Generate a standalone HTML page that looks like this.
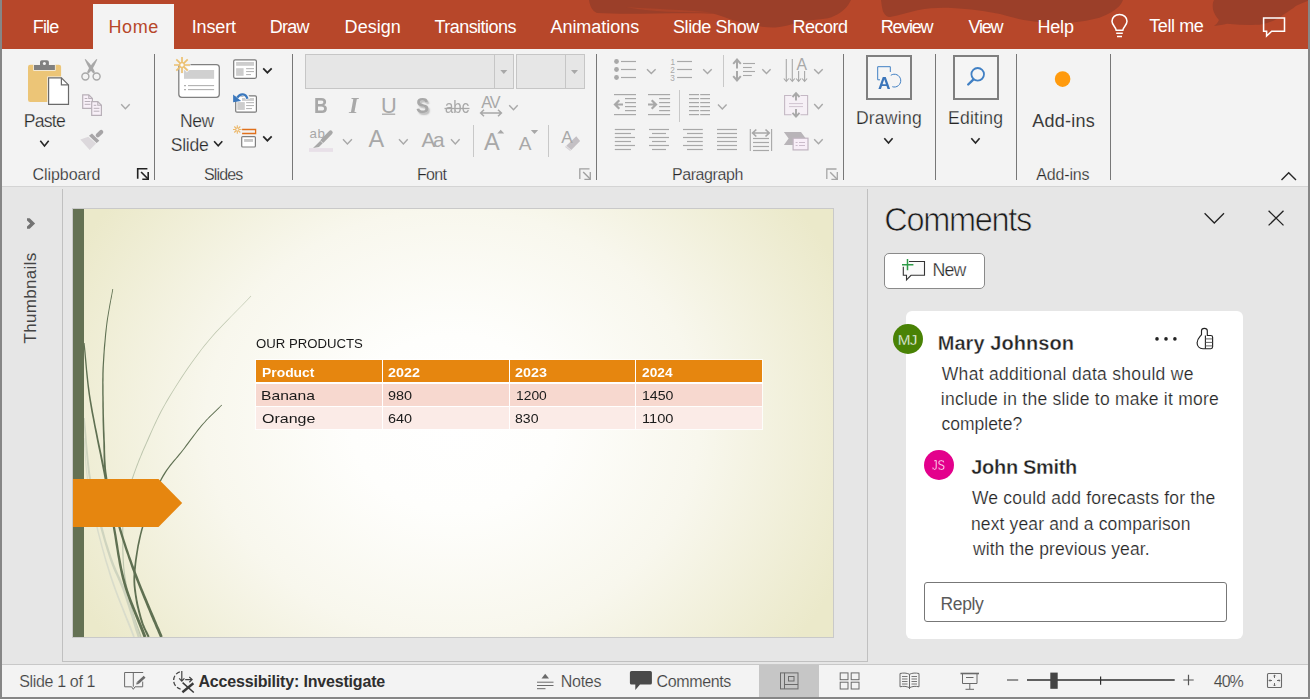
<!DOCTYPE html>
<html lang="en"><head><meta charset="utf-8"><title>PowerPoint - Comments</title>
<style>
*{box-sizing:border-box;margin:0;padding:0}
html,body{width:1310px;height:699px;overflow:hidden;background:#e6e6e6;font-family:"Liberation Sans",sans-serif}
#app{position:absolute;left:0;top:0;width:1310px;height:699px;overflow:hidden;background:#e6e6e6}
.t{position:absolute;white-space:pre;font-family:"Liberation Sans",sans-serif}
.b{position:absolute}
svg{position:absolute;left:0;top:0;overflow:visible}
</style></head>
<body><div id="app">
<div class="b" style="left:0;top:0;width:1310px;height:49px;background:#b7472a"></div>
<svg width="1310" height="49" viewBox="0 0 1310 49">
<g fill="#9b3f29">
<path d="M589 0 C590 6 592 11 597 13 C630 15 680 12 713.7 13.7 C722 16 728 18.5 734 20.6 C744 24 752 25.5 759.5 26.3 C765 27.3 770 27.7 775.6 27.5 C783 27 790 25 796 23 C808 20.5 818 19.5 828 18.3 C838 15 843 11 846.6 6.9 C849 4 850 2 851 0 Z"/>
<path d="M881 0 C881.5 4 882 8 883 11.4 C885 15 887 17 890 17 C900 15.5 908 12.5 917.5 10.3 C930 8 940 7.5 952 8 C970 9 985 11 1000 14 C1008 16 1016 18.5 1023.7 20 C1040 23 1056 23.5 1071 22.5 C1082 21.5 1091 20 1099.4 17.7 C1108 14.5 1114 11 1118.3 7 C1120.5 5 1122 2.5 1123 0 Z"/>
<path d="M1214 0 C1212.5 3 1212.5 6 1213 9.5 C1214 13 1216 17 1218.9 20 C1218 22.5 1216 24.5 1214 26 C1219 25.5 1223 24.5 1227 23.7 C1238 24.8 1249 25.2 1260 24.8 C1270 23 1278 19 1284 14.2 C1289 11 1293 8.5 1295.8 6 C1300 4 1305 2 1310 0 Z"/>
</g>
<path d="M626 7 C650 9 685 9.5 712 12.5 C685 12.5 650 12 626 7 Z" fill="#ab4329"/>
</svg>
<div class="b" style="left:93px;top:4px;width:81px;height:46px;background:#f3f3f3"></div>
<div class="t" style="left:32.80px;top:15px;font-size:18px;line-height:24px;letter-spacing:-0.868px;color:#ffffff;">File</div>
<div class="t" style="left:191.70px;top:15px;font-size:18px;line-height:24px;letter-spacing:-0.146px;color:#ffffff;">Insert</div>
<div class="t" style="left:269.80px;top:15px;font-size:18px;line-height:24px;letter-spacing:-0.739px;color:#ffffff;">Draw</div>
<div class="t" style="left:344.60px;top:15px;font-size:18px;line-height:24px;letter-spacing:0.036px;color:#ffffff;">Design</div>
<div class="t" style="left:434.50px;top:15px;font-size:18px;line-height:24px;letter-spacing:-0.548px;color:#ffffff;">Transitions</div>
<div class="t" style="left:550.40px;top:15px;font-size:18px;line-height:24px;letter-spacing:-0.016px;color:#ffffff;">Animations</div>
<div class="t" style="left:673.00px;top:15px;font-size:18px;line-height:24px;letter-spacing:-0.418px;color:#ffffff;">Slide Show</div>
<div class="t" style="left:792.50px;top:15px;font-size:18px;line-height:24px;letter-spacing:-0.504px;color:#ffffff;">Record</div>
<div class="t" style="left:880.70px;top:15px;font-size:18px;line-height:24px;letter-spacing:-1.226px;color:#ffffff;">Review</div>
<div class="t" style="left:968.60px;top:15px;font-size:18px;line-height:24px;letter-spacing:-1.301px;color:#ffffff;">View</div>
<div class="t" style="left:1037.40px;top:15px;font-size:18px;line-height:24px;letter-spacing:-0.140px;color:#ffffff;">Help</div>
<div class="t" style="left:108.60px;top:15px;font-size:18px;line-height:24px;letter-spacing:0.532px;color:#b7472a;">Home</div>
<div class="t" style="left:1149.30px;top:14px;font-size:18px;line-height:24px;letter-spacing:-0.434px;color:#ffffff;">Tell me</div>
<svg width="1310" height="49" viewBox="0 0 1310 49" fill="none" stroke="#fff" stroke-width="1.55">
<path d="M1116.2 30.2 C1116.2 27 1112 25.5 1112 21.3 C1112 17.3 1115.3 14.5 1119.5 14.5 C1123.700 14.5 1127 17.3 1127 21.3 C1127 25.5 1122.8 27 1122.8 30.2 Z"/>
<path d="M1116.2 33.300 H1122.8 M1117 36.400 H1122"/>
<path d="M1263.600 18 H1284.500 V31.200 H1271.700 L1266.600 36 V31.200 H1263.600 Z"/>
</svg>
<div class="b" style="left:0;top:0;width:2px;height:699px;background:#868686;z-index:50"></div>
<div class="b" style="left:1308px;top:0;width:2px;height:699px;background:#868686;z-index:50"></div>
<div class="b" style="left:0;top:697px;width:1310px;height:2px;background:#868686;z-index:50"></div>
<div class="b" style="left:0;top:49px;width:1310px;height:138px;background:#f3f3f3;border-bottom:1px solid #d4d4d4"></div>
<div class="b" style="left:154px;top:54px;width:1px;height:126px;background:#777"></div>
<div class="b" style="left:292px;top:54px;width:1px;height:126px;background:#777"></div>
<div class="b" style="left:596px;top:54px;width:1px;height:126px;background:#777"></div>
<div class="b" style="left:843px;top:54px;width:1px;height:126px;background:#777"></div>
<div class="b" style="left:935px;top:54px;width:1px;height:126px;background:#777"></div>
<div class="b" style="left:1016px;top:54px;width:1px;height:126px;background:#777"></div>
<div class="b" style="left:1110px;top:54px;width:1px;height:126px;background:#777"></div>
<div class="b" style="left:473px;top:125px;width:1px;height:32px;background:#c8c8c8"></div>
<div class="b" style="left:548px;top:125px;width:1px;height:32px;background:#c8c8c8"></div>
<div class="b" style="left:723px;top:55px;width:1px;height:32px;background:#c8c8c8"></div>
<div class="b" style="left:679px;top:90px;width:1px;height:32px;background:#c8c8c8"></div>
<div class="b" style="left:305px;top:54px;width:209px;height:35px;background:#e6e6e6;border:1px solid #c6c6c6"></div>
<div class="b" style="left:494px;top:54px;width:1px;height:35px;background:#c6c6c6"></div>
<div class="b" style="left:516px;top:54px;width:69px;height:35px;background:#e6e6e6;border:1px solid #c6c6c6"></div>
<div class="b" style="left:565px;top:54px;width:1px;height:35px;background:#c6c6c6"></div>
<div class="b" style="left:866px;top:55px;width:46px;height:45px;background:#f5f5f5;border:2px solid #7f7f7f"></div>
<div class="b" style="left:953px;top:55px;width:46px;height:45px;background:#f5f5f5;border:2px solid #7f7f7f"></div>
<svg width="1310" height="699" viewBox="0 0 1310 699" fill="none">
<rect x="28" y="64.800" width="33.100" height="37.100" rx="2.200" fill="#ecc577"/><path d="M33.300 70.800 V64.300 H39.300 V62 Q39.300 59.500 41.800 59.500 H47 Q49.500 59.500 49.500 62 V64.300 H55.600 V70.800 Z" fill="#f3f3f3"/><path d="M34 70 V65 H40 V62 Q40 60.200 41.800 60.200 H47 Q48.900 60.200 48.900 62 V65 H54.900 V70 Z" fill="#808080"/><circle cx="44.400" cy="63.400" r="1.500" fill="#f3f3f3"/><path d="M47.300 76.500 H62 L69.800 84.300 V105.600 H47.300 Z" fill="#f3f3f3"/><path d="M48.600 77.800 H61.400 L68.500 84.900 V104.300 H48.600 Z" fill="#fff" stroke="#6a6a6a" stroke-width="1.200"/><path d="M61.400 77.800 V84.900 H68.500" stroke="#6a6a6a" stroke-width="1.200"/><path d="M40.3 140.8 L44.5 146.0 L48.7 140.8" fill="none" stroke="#262626" stroke-width="1.6"/><path d="M84.7 59.6 L87.2 64.8 L89.8 69.5 L93.4 73.4 L95.0 72.2 L92.7 67.5 L89.4 63.3 L85.5 59.0Z" fill="#a8a8a8"/><path d="M96.5 59.0 L92.6 63.3 L89.3 67.5 L87.0 72.2 L88.6 73.4 L92.2 69.5 L94.8 64.8 L97.3 59.6Z" fill="#a8a8a8"/><circle cx="85.400" cy="76.500" r="3.500" stroke="#a8a8a8" stroke-width="1.400"/><circle cx="96.600" cy="76.500" r="3.500" stroke="#a8a8a8" stroke-width="1.400"/><path d="M82.700 94.900 H88.800 L92.400 98.500 V108.400 H82.700 Z" fill="#f8f0f8" stroke="#b8b0b8" stroke-width="1.200"/><path d="M88.800 94.900 V98.500 H92.400" stroke="#b8b0b8" stroke-width="1.100"/><path d="M84.7 98.5 H87.3" stroke="#b8b0b8" stroke-width="1" fill="none"/><path d="M84.7 101.5 H90.4" stroke="#b8b0b8" stroke-width="1" fill="none"/><path d="M84.7 104.3 H90.4" stroke="#b8b0b8" stroke-width="1" fill="none"/><path d="M91.700 101.700 H97.800 L101.400 105.300 V115.400 H91.700 Z" fill="#f8f0f8" stroke="#b8b0b8" stroke-width="1.200"/><path d="M97.800 101.700 V105.300 H101.400" stroke="#b8b0b8" stroke-width="1.100"/><path d="M93.7 105.3 H96.3" stroke="#b8b0b8" stroke-width="1" fill="none"/><path d="M93.7 108.3 H99.4" stroke="#b8b0b8" stroke-width="1" fill="none"/><path d="M93.7 111.2 H99.4" stroke="#b8b0b8" stroke-width="1" fill="none"/><path d="M121.2 104.2 L125.4 108.7 L129.7 104.2" fill="none" stroke="#a8a8a8" stroke-width="1.4"/><path d="M101.200 131.900 L97.800 135.300" stroke="#a6a4a6" stroke-width="4.200" stroke-linecap="round"/><path d="M89 135.700 L92 133.400 L99.300 140.800 L96.600 143.100 Z" fill="#a8a6a8"/><path d="M80.300 139.400 L88.300 136.700 L96.100 143.500 L89.700 149.900 Z" fill="#dcd8dc"/><path d="M137.7 178.8 V168.8 H147.4" fill="none" stroke="#222" stroke-width="1.62"/><path d="M141.1 172.0 L148.1 179.0" fill="none" stroke="#222" stroke-width="1.75"/><path d="M148.2 171.9 V179.2 H142.3" fill="none" stroke="#222" stroke-width="1.62"/><rect x="178.800" y="64.600" width="40.500" height="32.700" rx="3" fill="#fff" stroke="#808080" stroke-width="1.300"/><rect x="184" y="70" width="30.100" height="8.800" fill="#d0d0d0"/><path d="M188.0 85.6 H214.1" stroke="#b0b0b0" stroke-width="1.1" fill="none"/><path d="M188.0 89.6 H214.1" stroke="#b0b0b0" stroke-width="1.1" fill="none"/><path d="M184.0 85.6 H186.0" stroke="#b0b0b0" stroke-width="1.1" fill="none"/><path d="M184.0 89.6 H186.0" stroke="#b0b0b0" stroke-width="1.1" fill="none"/><g stroke="#f3f3f3" stroke-width="3.600"><path d="M182 65 V73.500 M182 65 H190.500 M182 65 L188.200 71.200"/></g><g stroke="#ecc070" stroke-width="1.700"><path d="M182 57 V73 M174 65 H190 M176.300 59.300 L187.700 70.700 M187.700 59.300 L176.300 70.700"/></g><circle cx="182" cy="65" r="2.300" fill="#fbfbfb" stroke="#ecc070" stroke-width="1.200"/><path d="M214.1 141.2 L218.2 145.9 L222.3 141.2" fill="none" stroke="#262626" stroke-width="1.6"/><rect x="233.700" y="59.800" width="22.700" height="18.500" rx="1.500" fill="#fff" stroke="#7a7a7a" stroke-width="1.200"/><rect x="236.100" y="62" width="17.900" height="3.800" fill="#cdcdcd"/><rect x="236.100" y="68.200" width="7.500" height="7.600" fill="#cdcdcd"/><path d="M246.1 68.7 H254.0" stroke="#b0b0b0" stroke-width="1" fill="none"/><path d="M246.1 71.6 H254.0" stroke="#b0b0b0" stroke-width="1" fill="none"/><path d="M246.1 74.6 H251.0" stroke="#b0b0b0" stroke-width="1" fill="none"/><path d="M263.2 68.3 L267.4 72.7 L271.7 68.3" fill="none" stroke="#262626" stroke-width="1.7"/><rect x="235.700" y="95.900" width="20.700" height="16.200" rx="1.200" fill="#fff" stroke="#7a7a7a" stroke-width="1.200"/><rect x="242" y="98" width="12" height="2.900" fill="#cdcdcd"/><rect x="237.300" y="102.100" width="7.500" height="7.800" fill="#cdcdcd"/><path d="M246.1 102.7 H254.0" stroke="#b0b0b0" stroke-width="1" fill="none"/><path d="M246.1 105.6 H254.0" stroke="#b0b0b0" stroke-width="1" fill="none"/><path d="M246.1 108.6 H252.0" stroke="#b0b0b0" stroke-width="1" fill="none"/><path d="M248 99.300 C246.500 93 240 91.800 236.600 97.200" stroke="#f3f3f3" stroke-width="4.400"/><path d="M247.400 98.800 C246 93.500 240.200 92.800 237.300 97.600" stroke="#3b78bd" stroke-width="2.300"/><path d="M233.100 94.400 V102.200 L241.200 101 Z" fill="#3b78bd"/><g stroke="#ecb86a" stroke-width="1.100"><path d="M237.300 125.200 V133.800 M233 129.500 H241.600 M234.300 126.500 L240.300 132.500 M240.300 126.500 L234.300 132.500"/></g><circle cx="237.300" cy="129.500" r="1.500" fill="#f3f3f3" stroke="#ecb86a" stroke-width="0.900"/><path d="M242.100 129.500 H255.600 V133.500 H242.100" stroke="#e0701c" stroke-width="1.300"/><rect x="241.700" y="136.600" width="13.700" height="10.400" rx="1" fill="#fff" stroke="#808080" stroke-width="1.200"/><rect x="244.100" y="139" width="8.900" height="2.900" fill="#c8c8c8"/><path d="M263.2 136.3 L267.4 140.7 L271.7 136.3" fill="none" stroke="#262626" stroke-width="1.7"/><path d="M500.3 70 H507.3 L503.8 74 Z" fill="#a8a8a8"/><path d="M571 70 H578 L574.5 74 Z" fill="#a8a8a8"/><path d="M382 114.2 H395.2" stroke="#a8a8a8" stroke-width="1.3"/><path d="M444.5 108.5 H469.5" stroke="#a8a8a8" stroke-width="1.3"/><path d="M481 113 H501 M484 109.800 L480.600 113 L484 116.2 M498 109.800 L501.400 113 L498 116.2" stroke="#a8a8a8" stroke-width="1.5"/><path d="M509.2 105.2 L513.5 109.8 L517.7 105.2" fill="none" stroke="#a8a8a8" stroke-width="1.4"/><rect x="309" y="148.1" width="24" height="3.8" fill="#e8e0e8"/><path d="M330.600 132.600 L322.800 140.400" stroke="#a8a8a8" stroke-width="4.2" stroke-linecap="round"/><path d="M321.800 139.300 L324.200 141.700 L319 146.900 L313 147.900 L316.600 144.500 Z" fill="#a8a8a8"/><path d="M320.300 140.600 L323 143.300" stroke="#f3f3f3" stroke-width="0.7"/><path d="M343.0 139.3 L347.4 144.0 L351.9 139.3" fill="none" stroke="#a8a8a8" stroke-width="1.4"/><path d="M399.0 139.3 L403.4 144.0 L407.7 139.3" fill="none" stroke="#a8a8a8" stroke-width="1.4"/><path d="M451.0 139.3 L455.3 144.0 L459.6 139.3" fill="none" stroke="#a8a8a8" stroke-width="1.4"/><path d="M497.2 133.500 L500.7 129.8 L504.2 133.500 Z" fill="#a8a8a8"/><path d="M530.8 130 H538.2 L534.5 133.9 Z" fill="#a8a8a8"/><path d="M576.300 136.300 L580.100 141.100 L571.300 149.900 L566.300 145.700 Z" fill="#c4c0c4"/><path d="M565.900 146.100 L570.900 150.300 L570.100 151.100 L565.100 146.900 Z" fill="#d4d0d4"/><path d="M579.8 178.9 V168.9 H589.5" fill="none" stroke="#a0a0a0" stroke-width="1.30"/><path d="M583.2 172.1 L590.2 179.1" fill="none" stroke="#a0a0a0" stroke-width="1.40"/><path d="M590.3 172.0 V179.3 H584.4" fill="none" stroke="#a0a0a0" stroke-width="1.30"/><circle cx="616.5" cy="61.5" r="2.4" fill="#a8a8a8"/><circle cx="616.5" cy="69.5" r="2.4" fill="#a8a8a8"/><circle cx="616.5" cy="77.5" r="2.4" fill="#a8a8a8"/><path d="M621.0 61.5 H636.0" stroke="#a8a8a8" stroke-width="1.2" fill="none"/><path d="M621.0 69.5 H636.0" stroke="#a8a8a8" stroke-width="1.2" fill="none"/><path d="M621.0 77.5 H636.0" stroke="#a8a8a8" stroke-width="1.2" fill="none"/><path d="M647.0 69.2 L651.3 73.6 L655.6 69.2" fill="none" stroke="#a8a8a8" stroke-width="1.4"/><path d="M677.1 61.5 H692.0" stroke="#a8a8a8" stroke-width="1.2" fill="none"/><path d="M677.1 69.5 H692.0" stroke="#a8a8a8" stroke-width="1.2" fill="none"/><path d="M677.1 77.5 H692.0" stroke="#a8a8a8" stroke-width="1.2" fill="none"/><path d="M703.2 69.2 L707.5 73.6 L711.7 69.2" fill="none" stroke="#a8a8a8" stroke-width="1.4"/><path d="M737 59.500 V68.500 M733.200 63.800 L737 59.600 L740.800 63.800 M737 71 V80.500 M733.200 76.200 L737 80.400 L740.800 76.200" stroke="#a8a8a8" stroke-width="2"/><path d="M743.0 63.5 H755.0" stroke="#a8a8a8" stroke-width="1.1" fill="none"/><path d="M743.0 71.5 H755.0" stroke="#a8a8a8" stroke-width="1.1" fill="none"/><path d="M743.0 67.5 H751.8" stroke="#a8a8a8" stroke-width="1.1" fill="none"/><path d="M743.0 75.5 H751.8" stroke="#a8a8a8" stroke-width="1.1" fill="none"/><path d="M762.3 69.2 L766.5 73.6 L770.6 69.2" fill="none" stroke="#a8a8a8" stroke-width="1.4"/><path d="M786.300 59 V81 M792.300 59 V81 M798.600 71 V81 M804.600 71 V81" stroke="#a8a8a8" stroke-width="1.1"/><path d="M783.8 78.500 L786.3 81.300 L788.8 78.500" stroke="#a8a8a8" stroke-width="1.1"/><path d="M789.8 78.500 L792.3 81.300 L794.8 78.500" stroke="#a8a8a8" stroke-width="1.1"/><path d="M796.1 78.500 L798.6 81.300 L801.1 78.500" stroke="#a8a8a8" stroke-width="1.1"/><path d="M802.1 78.500 L804.6 81.300 L807.1 78.500" stroke="#a8a8a8" stroke-width="1.1"/><path d="M814.2 69.2 L818.5 73.6 L822.7 69.2" fill="none" stroke="#a8a8a8" stroke-width="1.4"/><path d="M614.0 94.6 H636.0" stroke="#a8a8a8" stroke-width="1.2" fill="none"/><path d="M614.0 114.6 H636.0" stroke="#a8a8a8" stroke-width="1.2" fill="none"/><path d="M625.0 98.6 H636.0" stroke="#a8a8a8" stroke-width="1.2" fill="none"/><path d="M625.0 102.6 H636.0" stroke="#a8a8a8" stroke-width="1.2" fill="none"/><path d="M625.0 106.6 H636.0" stroke="#a8a8a8" stroke-width="1.2" fill="none"/><path d="M625.0 110.6 H636.0" stroke="#a8a8a8" stroke-width="1.2" fill="none"/><path d="M623 104.500 H615.500 M619.300 100.300 L615 104.500 L619.300 108.700" stroke="#a8a8a8" stroke-width="2.2"/><path d="M648.0 94.6 H670.1" stroke="#a8a8a8" stroke-width="1.2" fill="none"/><path d="M648.0 114.6 H670.1" stroke="#a8a8a8" stroke-width="1.2" fill="none"/><path d="M659.1 98.6 H670.1" stroke="#a8a8a8" stroke-width="1.2" fill="none"/><path d="M659.1 102.6 H670.1" stroke="#a8a8a8" stroke-width="1.2" fill="none"/><path d="M659.1 106.6 H670.1" stroke="#a8a8a8" stroke-width="1.2" fill="none"/><path d="M659.1 110.6 H670.1" stroke="#a8a8a8" stroke-width="1.2" fill="none"/><path d="M648 104.500 H655.500 M651.700 100.300 L656 104.500 L651.700 108.700" stroke="#a8a8a8" stroke-width="2.2"/><path d="M689.0 94.6 H699.0" stroke="#a8a8a8" stroke-width="1.2" fill="none"/><path d="M689.0 98.6 H699.0" stroke="#a8a8a8" stroke-width="1.2" fill="none"/><path d="M689.0 102.6 H699.0" stroke="#a8a8a8" stroke-width="1.2" fill="none"/><path d="M689.0 106.6 H699.0" stroke="#a8a8a8" stroke-width="1.2" fill="none"/><path d="M689.0 110.6 H699.0" stroke="#a8a8a8" stroke-width="1.2" fill="none"/><path d="M689.0 114.6 H699.0" stroke="#a8a8a8" stroke-width="1.2" fill="none"/><path d="M700.2 94.6 H710.0" stroke="#a8a8a8" stroke-width="1.2" fill="none"/><path d="M700.2 98.6 H710.0" stroke="#a8a8a8" stroke-width="1.2" fill="none"/><path d="M700.2 102.6 H710.0" stroke="#a8a8a8" stroke-width="1.2" fill="none"/><path d="M700.2 106.6 H710.0" stroke="#a8a8a8" stroke-width="1.2" fill="none"/><path d="M700.2 110.6 H710.0" stroke="#a8a8a8" stroke-width="1.2" fill="none"/><path d="M700.2 114.6 H710.0" stroke="#a8a8a8" stroke-width="1.2" fill="none"/><path d="M718.0 104.4 L722.3 108.9 L726.6 104.4" fill="none" stroke="#a8a8a8" stroke-width="1.4"/><rect x="784.600" y="95.500" width="23" height="19.200" fill="#f6f0f6"/><path d="M791.500 95.500 H784.600 V114.700 H791.500 M800.500 95.500 H807.600 V114.700 H800.500" stroke="#c4b8c4" stroke-width="1.1"/><path d="M789.0 103.6 H803.0" stroke="#d0c4d0" stroke-width="1" fill="none"/><path d="M789.0 106.6 H803.0" stroke="#d0c4d0" stroke-width="1" fill="none"/><path d="M796 93.400 V100.600 M792.500 97 L796 93.200 L799.500 97 M796 109 V116.400 M792.500 112.800 L796 116.600 L799.500 112.800" stroke="#a8a8a8" stroke-width="1.9"/><path d="M814.2 104.0 L818.5 108.6 L822.7 104.0" fill="none" stroke="#a8a8a8" stroke-width="1.4"/><path d="M614.8 129.5 H635.0" stroke="#a8a8a8" stroke-width="1.2" fill="none"/><path d="M649.0 129.5 H669.0" stroke="#a8a8a8" stroke-width="1.2" fill="none"/><path d="M683.0 129.5 H702.8" stroke="#a8a8a8" stroke-width="1.2" fill="none"/><path d="M717.0 129.5 H737.0" stroke="#a8a8a8" stroke-width="1.2" fill="none"/><path d="M614.8 133.5 H631.0" stroke="#a8a8a8" stroke-width="1.2" fill="none"/><path d="M652.0 133.5 H666.0" stroke="#a8a8a8" stroke-width="1.2" fill="none"/><path d="M687.0 133.5 H702.8" stroke="#a8a8a8" stroke-width="1.2" fill="none"/><path d="M717.0 133.5 H737.0" stroke="#a8a8a8" stroke-width="1.2" fill="none"/><path d="M614.8 137.5 H635.0" stroke="#a8a8a8" stroke-width="1.2" fill="none"/><path d="M649.0 137.5 H669.0" stroke="#a8a8a8" stroke-width="1.2" fill="none"/><path d="M683.0 137.5 H702.8" stroke="#a8a8a8" stroke-width="1.2" fill="none"/><path d="M717.0 137.5 H737.0" stroke="#a8a8a8" stroke-width="1.2" fill="none"/><path d="M614.8 141.5 H631.0" stroke="#a8a8a8" stroke-width="1.2" fill="none"/><path d="M652.0 141.5 H666.0" stroke="#a8a8a8" stroke-width="1.2" fill="none"/><path d="M687.0 141.5 H702.8" stroke="#a8a8a8" stroke-width="1.2" fill="none"/><path d="M717.0 141.5 H737.0" stroke="#a8a8a8" stroke-width="1.2" fill="none"/><path d="M614.8 145.5 H635.0" stroke="#a8a8a8" stroke-width="1.2" fill="none"/><path d="M649.0 145.5 H669.0" stroke="#a8a8a8" stroke-width="1.2" fill="none"/><path d="M683.0 145.5 H702.8" stroke="#a8a8a8" stroke-width="1.2" fill="none"/><path d="M717.0 145.5 H737.0" stroke="#a8a8a8" stroke-width="1.2" fill="none"/><path d="M614.8 149.5 H631.0" stroke="#a8a8a8" stroke-width="1.2" fill="none"/><path d="M652.0 149.5 H666.0" stroke="#a8a8a8" stroke-width="1.2" fill="none"/><path d="M687.0 149.5 H702.8" stroke="#a8a8a8" stroke-width="1.2" fill="none"/><path d="M717.0 149.5 H737.0" stroke="#a8a8a8" stroke-width="1.2" fill="none"/><path d="M750.300 129 V151 M771.600 129 V151" stroke="#a8a8a8" stroke-width="1.1"/><path d="M752.800 133 H769 M756.300 129.500 L752.600 133 L756.300 136.500 M765.500 129.500 L769.200 133 L765.500 136.500" stroke="#a8a8a8" stroke-width="1.7"/><path d="M753.0 138.5 H769.0" stroke="#a8a8a8" stroke-width="1.2" fill="none"/><path d="M753.0 142.5 H769.0" stroke="#a8a8a8" stroke-width="1.2" fill="none"/><path d="M753.0 146.5 H769.0" stroke="#a8a8a8" stroke-width="1.2" fill="none"/><path d="M753.0 150.5 H769.0" stroke="#a8a8a8" stroke-width="1.2" fill="none"/><path d="M783.900 132 H801 L805.500 138 V145 H783.900 L788.600 138.500 Z" fill="#b8b4b8"/><rect x="793.100" y="138.200" width="14.900" height="11.700" fill="#f8eef8" stroke="#c0b4c0" stroke-width="1.2"/><path d="M795.6 142.5 H797.6" stroke="#cbbccb" stroke-width="1" fill="none"/><path d="M795.6 145.5 H797.6" stroke="#cbbccb" stroke-width="1" fill="none"/><path d="M799.0 142.5 H805.0" stroke="#cbbccb" stroke-width="1" fill="none"/><path d="M799.0 145.5 H805.0" stroke="#cbbccb" stroke-width="1" fill="none"/><path d="M814.2 139.2 L818.5 143.8 L822.7 139.2" fill="none" stroke="#a8a8a8" stroke-width="1.4"/><path d="M826.8 179.0 V169.0 H836.5" fill="none" stroke="#a6a6a6" stroke-width="1.30"/><path d="M830.2 172.2 L837.2 179.2" fill="none" stroke="#a6a6a6" stroke-width="1.40"/><path d="M837.3 172.1 V179.4 H831.4" fill="none" stroke="#a6a6a6" stroke-width="1.30"/><path d="M880 79.800 H877.700 V66.700 H890.300 V72" stroke="#4180c4" stroke-width="1"/><path d="M890.800 75.300 A6.400 6.400 0 1 1 892.300 86.700" stroke="#4180c4" stroke-width="1"/><path d="M884.3 138.2 L888.5 143.1 L892.6 138.2" fill="none" stroke="#262626" stroke-width="1.6"/><circle cx="977.700" cy="74.300" r="6.300" stroke="#4180c4" stroke-width="1.800"/><path d="M973 79.800 L968.200 84.500" stroke="#4180c4" stroke-width="2.400" stroke-linecap="round"/><path d="M971.3 138.2 L975.5 143.1 L979.6 138.2" fill="none" stroke="#262626" stroke-width="1.6"/><circle cx="1062.6" cy="79.100" r="7.800" fill="#ff9a0a" filter="url(#bl)"/><defs><filter id="bl" x="-20%" y="-20%" width="140%" height="140%"><feGaussianBlur stdDeviation="0.7"/></filter></defs><path d="M1281.5 180 L1288.700 172.800 L1296 180" stroke="#262626" stroke-width="1.4"/></svg>
<div class="t" style="left:23.80px;top:109px;font-size:17.6px;line-height:24px;letter-spacing:-0.754px;color:#262626;-webkit-text-stroke:0.25px #f3f3f3;">Paste</div>
<div class="t" style="left:32.50px;top:164px;font-size:16px;line-height:21px;letter-spacing:-0.061px;color:#262626;-webkit-text-stroke:0.25px #f3f3f3;">Clipboard</div>
<div class="t" style="left:180.00px;top:109px;font-size:17.6px;line-height:24px;letter-spacing:-0.449px;color:#262626;-webkit-text-stroke:0.25px #f3f3f3;">New</div>
<div class="t" style="left:170.80px;top:133px;font-size:17.6px;line-height:24px;letter-spacing:-0.310px;color:#262626;-webkit-text-stroke:0.25px #f3f3f3;">Slide</div>
<div class="t" style="left:203.90px;top:164px;font-size:16px;line-height:21px;letter-spacing:-0.836px;color:#262626;-webkit-text-stroke:0.25px #f3f3f3;">Slides</div>
<div class="t" style="left:417.00px;top:164px;font-size:16px;line-height:21px;letter-spacing:-0.690px;color:#262626;-webkit-text-stroke:0.25px #f3f3f3;">Font</div>
<div class="t" style="left:671.90px;top:164px;font-size:16px;line-height:21px;letter-spacing:-0.415px;color:#262626;-webkit-text-stroke:0.25px #f3f3f3;">Paragraph</div>
<div class="t" style="left:855.90px;top:106px;font-size:17.6px;line-height:24px;letter-spacing:0.206px;color:#262626;-webkit-text-stroke:0.25px #f3f3f3;">Drawing</div>
<div class="t" style="left:948.10px;top:106px;font-size:17.6px;line-height:24px;letter-spacing:0.181px;color:#262626;-webkit-text-stroke:0.25px #f3f3f3;">Editing</div>
<div class="t" style="left:1032.30px;top:109px;font-size:18px;line-height:24px;letter-spacing:0.228px;color:#3b3b3b;">Add-ins</div>
<div class="t" style="left:1036.30px;top:164px;font-size:16px;line-height:21px;letter-spacing:-0.158px;color:#262626;-webkit-text-stroke:0.25px #f3f3f3;">Add-ins</div>
<div class="t" style="left:313.93px;top:91px;font-size:21.8px;line-height:29px;letter-spacing:0.000px;color:#a8a8a8;font-weight:700;transform:scaleX(0.8709);transform-origin:0 0;">B</div>
<div class="t" style="left:349.36px;top:91px;font-size:22.5px;line-height:29px;letter-spacing:0.000px;color:#a8a8a8;font-weight:700;font-style:italic;font-family:'Liberation Serif',serif;transform:scaleX(1.0627);transform-origin:0 0;">I</div>
<div class="t" style="left:381.00px;top:91px;font-size:21.8px;line-height:29px;letter-spacing:-0.809px;color:#a8a8a8;">U</div>
<div class="t" style="left:415.50px;top:91px;font-size:21.8px;line-height:29px;letter-spacing:0.000px;color:#a8a8a8;font-weight:700;transform:scaleX(0.8923);transform-origin:0 0;text-shadow:1.6px 1.6px 1.6px #bdbdbd;">S</div>
<div class="t" style="left:444.90px;top:95px;font-size:17.8px;line-height:24px;letter-spacing:0.000px;color:#a8a8a8;transform:scaleX(0.8408);transform-origin:0 0;">abc</div>
<div class="t" style="left:481.30px;top:91px;font-size:16.2px;line-height:22px;letter-spacing:-1.209px;color:#a8a8a8;">AV</div>
<div class="t" style="left:309.50px;top:124px;font-size:13.3px;line-height:19px;letter-spacing:0.598px;color:#a8a8a8;">ab</div>
<div class="t" style="left:368.60px;top:124px;font-size:23.5px;line-height:30px;letter-spacing:-0.213px;color:#a8a8a8;">A</div>
<div class="t" style="left:421.50px;top:126px;font-size:20.8px;line-height:27px;letter-spacing:-2.387px;color:#a8a8a8;">Aa</div>
<div class="t" style="left:484.00px;top:127px;font-size:23.5px;line-height:30px;letter-spacing:-0.313px;color:#a8a8a8;">A</div>
<div class="t" style="left:518.80px;top:131px;font-size:19px;line-height:25px;letter-spacing:-0.315px;color:#a8a8a8;">A</div>
<div class="t" style="left:561.30px;top:125px;font-size:17.2px;line-height:24px;letter-spacing:-2.205px;color:#a8a8a8;">A</div>
<div class="t" style="left:670.60px;top:56px;font-size:8.2px;line-height:13px;letter-spacing:-1.509px;color:#a8a8a8;">1</div>
<div class="t" style="left:670.30px;top:64px;font-size:8.2px;line-height:13px;letter-spacing:-1.009px;color:#a8a8a8;">2</div>
<div class="t" style="left:670.30px;top:72px;font-size:8.2px;line-height:13px;letter-spacing:-1.009px;color:#a8a8a8;">3</div>
<div class="t" style="left:796.60px;top:54px;font-size:15.8px;line-height:21px;letter-spacing:0.390px;color:#a8a8a8;">A</div>
<div class="t" style="left:877.50px;top:73px;font-size:16px;line-height:21px;letter-spacing:0.000px;color:#3c76ba;font-weight:700;transform:scaleX(1.0826);transform-origin:0 0;">A</div>
<div class="b" style="left:62px;top:189px;width:1px;height:473px;background:#c0c0c0"></div>
<div class="b" style="left:62px;top:661px;width:806px;height:1px;background:#c0c0c0"></div>
<div class="b" style="left:867px;top:189px;width:1px;height:473px;background:#c0c0c0"></div>
<svg width="1310" height="699" viewBox="0 0 1310 699" fill="none"><path d="M27 218.200 H29.700 L35.100 223.400 L29.700 228.700 H27 V226.500 L30.200 223.400 L27 220.400 Z" fill="#737373"/></svg>
<div class="t" style="left:-18.8px;top:286.7px;width:100px;height:22px;line-height:22px;font-size:17px;letter-spacing:0.31px;color:#444;text-align:center;transform:rotate(-90deg);transform-origin:50% 50%;">Thumbnails</div>
<div class="b" style="left:72px;top:208px;width:762px;height:430px;background:#c9c9c9"></div>
<div class="b" id="slide" style="left:73px;top:209px;width:760px;height:428px;overflow:hidden;background:radial-gradient(ellipse 56% 86% at 50% 50%, #ffffff 0%, #fefefc 24%, #f8f7ed 58%, #ebe9ca 100%)">
<svg width="760" height="428" viewBox="73 209 760 428" fill="none">
<path d="M250.8 295.8 L246.9 299.9 L243.0 303.9 L239.1 307.9 L235.1 311.9 L231.2 315.9 L227.2 319.9 L223.3 323.9 L219.5 328.0 L215.6 332.1 L211.9 336.3 L208.3 340.5 L204.7 344.8 L201.2 349.2 L197.8 353.7 L194.3 358.4 L191.0 363.1 L187.6 367.8 L184.4 372.6 L181.2 377.3 L178.2 382.0 L175.2 386.7 L172.4 391.2 L169.7 395.6 L167.1 399.8 L164.8 403.9 L162.5 407.9 L160.4 411.8 L158.5 415.6 L156.6 419.4 L154.9 423.1 L153.2 426.7 L151.6 430.2 L150.0 433.7 L148.5 437.1 L147.0 440.5 L145.6 443.8 L144.1 447.1 L142.7 450.2 L141.4 453.3 L140.2 456.4 L138.9 459.3 L137.8 462.3 L136.7 465.1 L135.6 467.9 L134.6 470.7 L133.6 473.5 L132.6 476.2 L131.7 478.8 L130.8 481.5 L130.0 484.1 L129.2 486.8 L128.5 489.3 L127.8 491.9 L127.1 494.4 L126.5 496.8 L125.9 499.2 L125.3 501.5 L124.9 503.7 L124.4 505.8 L124.0 507.9 L123.6 509.8 L123.3 511.4 L123.1 512.8 L122.9 514.1 L122.7 515.3 L122.6 516.6 L122.5 517.9 L122.4 519.2 L122.3 520.8 L122.3 522.6 L122.3 524.6 L122.3 527.0 L122.2 529.7 L122.2 532.8 L122.2 536.1 L122.2 539.7 L122.2 543.4 L122.2 547.2 L122.3 551.1 L122.4 555.0 L122.6 558.9 L122.8 562.8 L123.1 566.5 L123.4 570.1 L123.8 573.6 L124.3 577.1 L124.9 580.6 L125.5 584.1 L126.2 587.7 L126.9 591.1 L127.7 594.5 L128.4 597.9 L129.2 601.1 L129.9 604.3 L130.7 607.3 L131.4 610.2 L132.1 612.9 L132.8 615.4 L133.6 617.9 L134.3 620.2 L135.1 622.4 L135.8 624.5 L136.6 626.6 L137.4 628.7 L138.1 630.8 L138.9 632.9 L139.6 635.0 L140.4 637.2 L141.6 636.8 L140.9 634.6 L140.1 632.4 L139.3 630.3 L138.6 628.3 L137.8 626.2 L137.0 624.1 L136.3 622.0 L135.5 619.8 L134.8 617.5 L134.0 615.1 L133.3 612.5 L132.6 609.8 L131.9 607.0 L131.1 604.0 L130.4 600.8 L129.6 597.6 L128.8 594.3 L128.1 590.9 L127.4 587.4 L126.7 583.9 L126.1 580.4 L125.5 576.9 L125.0 573.4 L124.6 569.9 L124.2 566.4 L124.0 562.7 L123.7 558.9 L123.6 555.0 L123.4 551.1 L123.4 547.2 L123.3 543.4 L123.3 539.7 L123.3 536.1 L123.3 532.8 L123.3 529.8 L123.3 527.0 L123.4 524.6 L123.4 522.6 L123.4 520.8 L123.5 519.3 L123.5 517.9 L123.6 516.7 L123.8 515.5 L123.9 514.3 L124.1 513.0 L124.4 511.6 L124.7 510.0 L125.0 508.1 L125.4 506.1 L125.9 503.9 L126.4 501.7 L126.9 499.4 L127.5 497.1 L128.1 494.6 L128.8 492.2 L129.5 489.6 L130.2 487.1 L131.0 484.4 L131.8 481.8 L132.7 479.2 L133.6 476.5 L134.5 473.8 L135.5 471.1 L136.5 468.3 L137.6 465.5 L138.7 462.6 L139.8 459.7 L141.0 456.7 L142.3 453.7 L143.6 450.6 L145.0 447.4 L146.4 444.2 L147.9 440.9 L149.4 437.5 L150.9 434.1 L152.4 430.6 L154.0 427.0 L155.7 423.4 L157.4 419.8 L159.3 416.0 L161.2 412.2 L163.3 408.3 L165.5 404.3 L167.9 400.2 L170.4 396.0 L173.1 391.6 L175.9 387.1 L178.8 382.5 L181.9 377.8 L185.0 373.0 L188.3 368.3 L191.6 363.5 L195.0 358.8 L198.4 354.2 L201.8 349.6 L205.3 345.2 L208.8 340.9 L212.4 336.7 L216.2 332.6 L220.0 328.5 L223.8 324.4 L227.7 320.4 L231.6 316.3 L235.6 312.3 L239.5 308.3 L243.5 304.3 L247.4 300.3 L251.2 296.2Z" fill="#bcc5ad"/><path d="M83.2 418.1 L83.6 423.2 L84.1 428.4 L84.5 433.6 L84.9 438.9 L85.3 444.1 L85.7 449.4 L86.2 454.6 L86.7 459.7 L87.2 464.8 L87.7 469.7 L88.3 474.5 L89.0 479.2 L89.8 483.7 L90.6 488.1 L91.5 492.4 L92.4 496.7 L93.3 500.8 L94.3 504.9 L95.3 508.8 L96.3 512.7 L97.3 516.5 L98.3 520.2 L99.3 523.8 L100.2 527.3 L101.1 530.7 L102.0 533.9 L102.9 537.1 L103.7 540.1 L104.6 543.1 L105.5 546.0 L106.3 548.8 L107.2 551.6 L108.1 554.3 L109.0 557.0 L109.9 559.7 L110.9 562.4 L111.8 565.1 L112.8 567.6 L113.8 569.9 L114.8 572.2 L115.9 574.5 L116.9 576.8 L117.9 579.1 L119.0 581.4 L120.0 583.9 L121.1 586.5 L122.2 589.3 L123.3 592.2 L124.4 595.5 L125.6 598.9 L126.7 602.4 L127.9 606.1 L129.1 609.9 L130.3 613.8 L131.6 617.8 L132.8 621.8 L134.0 625.7 L135.2 629.7 L136.5 633.6 L137.7 637.4 L140.3 636.6 L139.1 632.8 L137.9 628.9 L136.6 624.9 L135.4 621.0 L134.1 617.0 L132.9 613.0 L131.7 609.1 L130.4 605.3 L129.2 601.6 L128.0 598.0 L126.9 594.6 L125.7 591.4 L124.6 588.3 L123.5 585.5 L122.4 582.9 L121.3 580.4 L120.2 578.0 L119.1 575.7 L118.1 573.5 L117.1 571.2 L116.1 569.0 L115.1 566.6 L114.1 564.2 L113.1 561.6 L112.2 558.9 L111.2 556.2 L110.3 553.5 L109.4 550.8 L108.6 548.1 L107.7 545.3 L106.8 542.4 L105.9 539.5 L105.1 536.5 L104.2 533.3 L103.3 530.1 L102.4 526.7 L101.4 523.2 L100.5 519.6 L99.4 515.9 L98.4 512.2 L97.4 508.3 L96.4 504.4 L95.4 500.3 L94.4 496.2 L93.5 492.0 L92.6 487.7 L91.8 483.3 L91.0 478.8 L90.3 474.2 L89.7 469.5 L89.1 464.6 L88.6 459.5 L88.1 454.4 L87.6 449.2 L87.1 444.0 L86.7 438.7 L86.3 433.5 L85.8 428.2 L85.3 423.0 L84.8 417.9Z" fill="#cfd4bf"/><path d="M83.4 438.0 L83.7 441.4 L83.9 444.8 L84.2 448.1 L84.4 451.4 L84.6 454.8 L84.8 458.1 L85.1 461.5 L85.3 464.9 L85.7 468.3 L86.0 471.8 L86.4 475.4 L86.9 479.1 L87.5 482.8 L88.1 486.6 L88.7 490.5 L89.4 494.4 L90.1 498.4 L90.9 502.4 L91.7 506.4 L92.5 510.5 L93.4 514.6 L94.3 518.8 L95.3 523.0 L96.3 527.2 L97.3 531.4 L98.4 535.7 L99.5 540.0 L100.6 544.3 L101.8 548.7 L103.0 553.1 L104.2 557.6 L105.5 562.1 L106.9 566.6 L108.3 571.1 L109.7 575.7 L111.2 580.3 L112.8 584.9 L114.5 589.6 L116.2 594.3 L118.0 599.0 L119.9 603.8 L121.8 608.6 L123.7 613.4 L125.6 618.2 L127.5 623.0 L129.4 627.8 L131.3 632.6 L133.2 637.3 L134.8 636.7 L133.0 631.9 L131.1 627.1 L129.2 622.3 L127.2 617.5 L125.3 612.7 L123.4 607.9 L121.5 603.2 L119.6 598.4 L117.8 593.7 L116.0 589.0 L114.4 584.3 L112.8 579.7 L111.3 575.2 L109.8 570.6 L108.4 566.1 L107.0 561.6 L105.7 557.2 L104.5 552.7 L103.2 548.3 L102.1 544.0 L100.9 539.6 L99.8 535.3 L98.7 531.1 L97.7 526.8 L96.7 522.6 L95.7 518.5 L94.8 514.3 L93.9 510.2 L93.1 506.2 L92.3 502.1 L91.5 498.1 L90.8 494.2 L90.1 490.3 L89.4 486.4 L88.8 482.6 L88.3 478.9 L87.7 475.3 L87.3 471.7 L86.9 468.2 L86.6 464.8 L86.3 461.4 L86.1 458.0 L85.8 454.7 L85.6 451.4 L85.4 448.0 L85.1 444.7 L84.9 441.3 L84.6 438.0Z" fill="#d9dccb"/><path d="M83.4 343.1 L83.9 347.7 L84.3 352.3 L84.7 356.8 L85.1 361.2 L85.5 365.7 L85.9 370.2 L86.3 374.8 L86.8 379.4 L87.3 384.3 L87.9 389.3 L88.6 394.6 L89.4 400.1 L90.4 406.0 L91.5 412.4 L92.8 419.1 L94.1 426.0 L95.5 433.1 L96.9 440.2 L98.3 447.3 L99.8 454.3 L101.1 461.1 L102.4 467.6 L103.6 473.6 L104.6 479.2 L105.5 484.2 L106.4 488.9 L107.1 493.2 L107.8 497.2 L108.4 501.0 L109.0 504.6 L109.6 508.2 L110.2 511.7 L110.8 515.3 L111.4 519.1 L112.1 523.0 L112.8 527.2 L113.5 531.6 L114.3 536.1 L115.0 540.7 L115.7 545.3 L116.5 550.1 L117.2 554.8 L118.1 559.6 L118.9 564.4 L119.9 569.2 L120.9 574.0 L122.0 578.7 L123.3 583.4 L124.6 588.0 L126.1 592.5 L127.7 597.1 L129.3 601.6 L131.1 606.1 L132.9 610.6 L134.7 615.1 L136.5 619.6 L138.3 624.1 L140.1 628.6 L141.9 633.0 L143.6 637.5 L146.4 636.5 L144.6 632.0 L142.8 627.5 L140.9 623.0 L139.1 618.5 L137.2 614.1 L135.4 609.6 L133.6 605.1 L131.9 600.7 L130.2 596.2 L128.6 591.7 L127.1 587.2 L125.7 582.6 L124.5 578.1 L123.4 573.4 L122.3 568.7 L121.4 564.0 L120.5 559.2 L119.6 554.4 L118.8 549.7 L118.1 545.0 L117.3 540.3 L116.6 535.7 L115.8 531.2 L115.0 526.8 L114.2 522.6 L113.6 518.7 L112.9 515.0 L112.3 511.4 L111.7 507.8 L111.1 504.3 L110.5 500.6 L109.8 496.8 L109.1 492.8 L108.4 488.5 L107.5 483.9 L106.6 478.8 L105.5 473.2 L104.3 467.2 L103.0 460.7 L101.6 454.0 L100.1 447.0 L98.6 439.9 L97.2 432.8 L95.7 425.7 L94.4 418.8 L93.1 412.1 L92.0 405.8 L91.0 399.9 L90.1 394.4 L89.4 389.1 L88.7 384.1 L88.2 379.3 L87.7 374.6 L87.2 370.1 L86.8 365.6 L86.4 361.1 L86.0 356.7 L85.6 352.2 L85.1 347.6 L84.6 342.9Z" fill="#5f7052"/><path d="M112.4 288.9 L111.9 291.8 L111.4 294.7 L110.8 297.5 L110.3 300.4 L109.7 303.2 L109.2 306.0 L108.7 308.9 L108.2 311.8 L107.7 314.8 L107.2 317.7 L106.7 320.8 L106.3 323.9 L105.9 327.2 L105.5 330.5 L105.1 333.9 L104.8 337.4 L104.5 340.9 L104.1 344.5 L103.8 348.0 L103.6 351.5 L103.3 355.0 L103.1 358.4 L102.9 361.7 L102.7 365.0 L102.5 368.1 L102.4 371.1 L102.3 374.0 L102.3 376.9 L102.2 379.8 L102.2 382.6 L102.2 385.4 L102.2 388.2 L102.2 391.0 L102.2 394.0 L102.3 396.9 L102.3 400.0 L102.3 403.2 L102.3 406.4 L102.4 409.7 L102.4 413.0 L102.5 416.4 L102.5 419.8 L102.6 423.2 L102.7 426.6 L102.8 430.0 L102.9 433.4 L103.0 436.7 L103.2 440.0 L103.3 443.3 L103.3 446.5 L103.4 449.6 L103.5 452.8 L103.5 455.9 L103.6 459.0 L103.7 462.2 L103.9 465.4 L104.2 468.7 L104.5 472.1 L105.0 475.6 L105.6 479.2 L106.3 482.9 L107.1 486.8 L108.0 490.8 L109.0 494.8 L110.1 499.0 L111.3 503.2 L112.4 507.3 L113.6 511.5 L114.9 515.6 L116.1 519.6 L117.2 523.5 L118.3 527.3 L119.4 531.0 L120.5 534.6 L121.6 538.1 L122.7 541.6 L123.8 545.0 L124.9 548.4 L126.0 551.8 L127.2 555.1 L128.3 558.5 L129.5 561.8 L130.6 565.1 L131.8 568.4 L133.1 571.8 L134.3 575.2 L135.6 578.6 L137.0 582.0 L138.3 585.3 L139.7 588.7 L141.0 592.0 L142.3 595.2 L143.6 598.4 L144.9 601.6 L146.1 604.6 L147.3 607.5 L148.5 610.3 L149.6 613.1 L150.7 615.7 L151.8 618.2 L152.8 620.7 L153.9 623.1 L154.9 625.5 L155.9 627.9 L157.0 630.3 L158.0 632.7 L159.0 635.1 L160.1 637.6 L162.7 636.4 L161.7 634.0 L160.6 631.5 L159.6 629.1 L158.5 626.8 L157.5 624.4 L156.5 622.0 L155.4 619.6 L154.4 617.1 L153.3 614.6 L152.2 612.0 L151.0 609.3 L149.9 606.5 L148.6 603.6 L147.4 600.5 L146.1 597.4 L144.7 594.2 L143.4 591.0 L142.0 587.7 L140.7 584.4 L139.3 581.0 L138.0 577.6 L136.7 574.3 L135.4 570.9 L134.2 567.6 L132.9 564.3 L131.8 561.0 L130.6 557.7 L129.4 554.4 L128.3 551.0 L127.1 547.7 L126.0 544.3 L124.9 540.9 L123.8 537.4 L122.7 533.9 L121.6 530.3 L120.5 526.7 L119.3 522.9 L118.1 519.0 L116.9 515.0 L115.7 510.9 L114.5 506.8 L113.2 502.6 L112.1 498.4 L111.0 494.3 L109.9 490.3 L109.0 486.3 L108.2 482.5 L107.4 478.8 L106.9 475.3 L106.4 471.9 L106.0 468.6 L105.8 465.3 L105.6 462.1 L105.4 459.0 L105.3 455.8 L105.2 452.7 L105.1 449.6 L105.1 446.4 L105.0 443.2 L104.8 440.0 L104.7 436.7 L104.6 433.3 L104.4 429.9 L104.3 426.5 L104.2 423.1 L104.1 419.7 L104.0 416.3 L103.9 413.0 L103.9 409.7 L103.8 406.4 L103.8 403.2 L103.7 400.0 L103.7 396.9 L103.6 393.9 L103.6 391.0 L103.6 388.2 L103.6 385.4 L103.5 382.6 L103.6 379.8 L103.6 376.9 L103.6 374.1 L103.7 371.1 L103.8 368.1 L103.9 365.0 L104.1 361.8 L104.3 358.5 L104.5 355.1 L104.7 351.6 L105.0 348.1 L105.3 344.5 L105.6 341.0 L105.9 337.5 L106.2 334.0 L106.6 330.6 L106.9 327.3 L107.3 324.1 L107.7 320.9 L108.1 317.9 L108.6 314.9 L109.1 312.0 L109.6 309.1 L110.1 306.2 L110.6 303.4 L111.1 300.5 L111.7 297.7 L112.2 294.8 L112.7 292.0 L113.2 289.1Z" fill="#5f7052"/><path d="M221.5 404.7 L220.0 406.3 L218.4 407.8 L216.8 409.3 L215.3 410.8 L213.7 412.3 L212.2 413.8 L210.6 415.3 L209.0 416.8 L207.5 418.4 L205.9 420.1 L204.3 421.9 L202.6 423.7 L201.0 425.6 L199.4 427.6 L197.7 429.6 L196.1 431.7 L194.4 433.9 L192.8 436.1 L191.1 438.3 L189.4 440.5 L187.7 442.8 L186.0 445.1 L184.3 447.4 L182.6 449.7 L180.8 451.9 L179.0 454.1 L177.2 456.2 L175.4 458.4 L173.5 460.5 L171.7 462.8 L169.8 465.0 L168.0 467.5 L166.1 470.0 L164.3 472.7 L162.6 475.6 L160.8 478.7 L159.1 482.1 L157.4 485.7 L155.6 489.5 L153.9 493.5 L152.2 497.7 L150.5 501.9 L148.8 506.2 L147.3 510.5 L145.8 514.7 L144.4 518.9 L143.0 522.9 L141.9 526.8 L140.8 530.6 L139.8 534.4 L138.9 538.2 L138.1 542.0 L137.3 545.8 L136.7 549.5 L136.1 553.1 L135.5 556.7 L135.0 560.1 L134.6 563.4 L134.2 566.5 L133.9 569.4 L133.7 572.1 L133.5 574.7 L133.4 577.0 L133.4 579.2 L133.4 581.3 L133.5 583.3 L133.6 585.3 L133.8 587.2 L134.0 589.1 L134.2 591.0 L134.5 593.0 L134.8 595.1 L135.1 597.3 L135.5 599.6 L135.9 601.9 L136.3 604.2 L136.8 606.5 L137.4 608.8 L137.9 611.1 L138.5 613.3 L139.1 615.5 L139.6 617.5 L140.2 619.5 L140.7 621.3 L141.3 623.0 L141.8 624.6 L142.4 626.1 L143.0 627.5 L143.6 628.8 L144.2 630.1 L144.8 631.3 L145.3 632.5 L145.9 633.7 L146.5 634.9 L147.1 636.1 L147.6 637.4 L149.6 636.6 L149.0 635.3 L148.4 634.0 L147.8 632.8 L147.2 631.6 L146.6 630.4 L146.0 629.2 L145.4 628.0 L144.9 626.7 L144.3 625.3 L143.7 623.9 L143.2 622.4 L142.7 620.7 L142.1 618.9 L141.5 617.0 L141.0 614.9 L140.4 612.8 L139.8 610.6 L139.3 608.4 L138.7 606.1 L138.2 603.8 L137.8 601.5 L137.3 599.3 L137.0 597.0 L136.6 594.9 L136.3 592.8 L136.1 590.8 L135.8 588.9 L135.6 587.0 L135.4 585.1 L135.3 583.2 L135.2 581.3 L135.2 579.2 L135.2 577.1 L135.3 574.8 L135.4 572.3 L135.7 569.6 L136.0 566.7 L136.3 563.6 L136.7 560.3 L137.2 556.9 L137.7 553.4 L138.3 549.8 L138.9 546.1 L139.7 542.4 L140.5 538.6 L141.3 534.8 L142.3 531.0 L143.3 527.2 L144.5 523.4 L145.8 519.3 L147.2 515.2 L148.6 510.9 L150.2 506.7 L151.8 502.4 L153.5 498.2 L155.1 494.1 L156.9 490.1 L158.6 486.2 L160.3 482.6 L162.0 479.3 L163.7 476.2 L165.4 473.4 L167.1 470.7 L168.9 468.2 L170.8 465.8 L172.6 463.5 L174.4 461.3 L176.3 459.1 L178.1 457.0 L179.9 454.8 L181.7 452.6 L183.4 450.3 L185.2 448.0 L186.9 445.7 L188.6 443.4 L190.2 441.2 L191.9 438.9 L193.6 436.7 L195.2 434.5 L196.9 432.3 L198.5 430.2 L200.1 428.2 L201.7 426.2 L203.4 424.3 L205.0 422.5 L206.5 420.7 L208.1 419.1 L209.7 417.5 L211.2 415.9 L212.8 414.4 L214.3 412.9 L215.9 411.4 L217.4 409.9 L219.0 408.4 L220.5 406.8 L222.1 405.3Z" fill="#5f7052"/><rect x="73" y="209" width="11" height="428" fill="#647153"/><path d="M73 479 H158.500 L182.200 503 L158.500 527 H73 Z" fill="#e6860f"/></svg>
</div>
<div class="b" style="left:255px;top:359px;width:508px;height:71px;background:rgba(255,255,255,0.82)"></div>
<div class="b" style="left:255px;top:382px;width:508px;height:2px;background:#fff"></div>
<div class="b" style="left:256px;top:360px;width:126px;height:22px;background:#e6860f"></div>
<div class="b" style="left:256px;top:384px;width:126px;height:22px;background:#f7d8cf"></div>
<div class="b" style="left:256px;top:407px;width:126px;height:22px;background:#fbebe7"></div>
<div class="b" style="left:383px;top:360px;width:126px;height:22px;background:#e6860f"></div>
<div class="b" style="left:383px;top:384px;width:126px;height:22px;background:#f7d8cf"></div>
<div class="b" style="left:383px;top:407px;width:126px;height:22px;background:#fbebe7"></div>
<div class="b" style="left:510px;top:360px;width:125px;height:22px;background:#e6860f"></div>
<div class="b" style="left:510px;top:384px;width:125px;height:22px;background:#f7d8cf"></div>
<div class="b" style="left:510px;top:407px;width:125px;height:22px;background:#fbebe7"></div>
<div class="b" style="left:636px;top:360px;width:126px;height:22px;background:#e6860f"></div>
<div class="b" style="left:636px;top:384px;width:126px;height:22px;background:#f7d8cf"></div>
<div class="b" style="left:636px;top:407px;width:126px;height:22px;background:#fbebe7"></div>
<div class="t" style="left:256.00px;top:334px;font-size:13.4px;line-height:19px;letter-spacing:0.000px;color:#1a1a1a;transform:scaleX(0.9835);transform-origin:0 0;">OUR PRODUCTS</div>
<div class="t" style="left:261.80px;top:363px;font-size:13.4px;line-height:19px;letter-spacing:0.000px;color:#fff;font-weight:700;transform:scaleX(1.0365);transform-origin:0 0;">Product</div>
<div class="t" style="left:388.00px;top:363px;font-size:13.4px;line-height:19px;letter-spacing:0.000px;color:#fff;font-weight:700;transform:scaleX(1.0733);transform-origin:0 0;">2022</div>
<div class="t" style="left:515.00px;top:363px;font-size:13.4px;line-height:19px;letter-spacing:0.000px;color:#fff;font-weight:700;transform:scaleX(1.0699);transform-origin:0 0;">2023</div>
<div class="t" style="left:641.50px;top:363px;font-size:13.4px;line-height:19px;letter-spacing:0.000px;color:#fff;font-weight:700;transform:scaleX(1.0247);transform-origin:0 0;">2024</div>
<div class="t" style="left:260.83px;top:386px;font-size:13.4px;line-height:19px;letter-spacing:0.000px;color:#1a1a1a;transform:scaleX(1.1679);transform-origin:0 0;">Banana</div>
<div class="t" style="left:388.00px;top:386px;font-size:13.4px;line-height:19px;letter-spacing:0.000px;color:#1a1a1a;transform:scaleX(1.0778);transform-origin:0 0;">980</div>
<div class="t" style="left:515.67px;top:386px;font-size:13.4px;line-height:19px;letter-spacing:0.000px;color:#1a1a1a;transform:scaleX(1.0335);transform-origin:0 0;">1200</div>
<div class="t" style="left:641.65px;top:386px;font-size:13.4px;line-height:19px;letter-spacing:0.000px;color:#1a1a1a;transform:scaleX(1.0547);transform-origin:0 0;">1450</div>
<div class="t" style="left:262.00px;top:409px;font-size:13.4px;line-height:19px;letter-spacing:0.000px;color:#1a1a1a;transform:scaleX(1.1939);transform-origin:0 0;">Orange</div>
<div class="t" style="left:388.00px;top:409px;font-size:13.4px;line-height:19px;letter-spacing:0.000px;color:#1a1a1a;transform:scaleX(1.0778);transform-origin:0 0;">640</div>
<div class="t" style="left:515.00px;top:409px;font-size:13.4px;line-height:19px;letter-spacing:0.000px;color:#1a1a1a;transform:scaleX(1.0504);transform-origin:0 0;">830</div>
<div class="t" style="left:641.61px;top:409px;font-size:13.4px;line-height:19px;letter-spacing:0.000px;color:#1a1a1a;transform:scaleX(1.0933);transform-origin:0 0;">1100</div>
<div class="t" style="left:884.20px;top:200px;font-size:32.5px;line-height:40px;letter-spacing:-1.282px;color:#1c1c1c;-webkit-text-stroke:0.7px #e6e6e6;">Comments</div>
<svg width="1310" height="699" viewBox="0 0 1310 699" fill="none"><path d="M1204.6 213.300 L1214.300 223 L1224 213.300" stroke="#222" stroke-width="1.3"/><path d="M1268.600 210.800 L1283.500 225.400 M1283.500 210.800 L1268.600 225.400" stroke="#222" stroke-width="1.3"/></svg>
<div class="b" style="left:884px;top:253px;width:101px;height:36px;background:#fff;border:1px solid #8a8a8a;border-radius:5px"></div>
<svg width="1310" height="699" viewBox="0 0 1310 699" fill="none"><path d="M909 261.500 H924.500 V275.300 H911 L906.500 279.800 V275.300 H903.300 V266.800" fill="#fafafa" stroke="#333" stroke-width="1.100"/><path d="M907.500 259 V270.200 M902 264.700 H913.400" stroke="#2e9c48" stroke-width="1.500"/></svg>
<div class="t" style="left:932.50px;top:258px;font-size:17.8px;line-height:24px;letter-spacing:-0.869px;color:#262626;-webkit-text-stroke:0.25px #fff;">New</div>
<div class="b" style="left:906px;top:311px;width:337px;height:328px;background:#fff;border-radius:6px"></div>
<div class="b" style="left:893px;top:324px;width:30px;height:30px;border-radius:50%;background:#498205"></div>
<div class="t" style="left:897.70px;top:329px;font-size:15.3px;line-height:21px;letter-spacing:-0.758px;color:#fff;-webkit-text-stroke:0.3px #498205;">MJ</div>
<div class="b" style="left:924px;top:450px;width:30px;height:30px;border-radius:50%;background:#e3008c"></div>
<div class="t" style="left:932.20px;top:455px;font-size:14.4px;line-height:20px;letter-spacing:0.000px;color:#fff;transform:scaleX(0.7717);transform-origin:0 0;-webkit-text-stroke:0.3px #e3008c;">JS</div>
<div class="t" style="left:937.70px;top:330px;font-size:20px;line-height:26px;letter-spacing:0.058px;color:#242424;font-weight:700;-webkit-text-stroke:0.35px #fff;">Mary Johnson</div>
<div class="t" style="left:971.30px;top:454px;font-size:20px;line-height:26px;letter-spacing:-0.319px;color:#242424;font-weight:700;-webkit-text-stroke:0.35px #fff;">John Smith</div>
<div class="t" style="left:941.80px;top:362px;font-size:17.5px;line-height:24px;letter-spacing:0.290px;color:#262626;-webkit-text-stroke:0.2px #fff;">What additional data should we</div>
<div class="t" style="left:940.80px;top:387px;font-size:17.5px;line-height:24px;letter-spacing:0.245px;color:#262626;-webkit-text-stroke:0.2px #fff;">include in the slide to make it more</div>
<div class="t" style="left:941.60px;top:412px;font-size:17.5px;line-height:24px;letter-spacing:-0.027px;color:#262626;-webkit-text-stroke:0.2px #fff;">complete?</div>
<div class="t" style="left:971.90px;top:486px;font-size:17.5px;line-height:24px;letter-spacing:0.214px;color:#262626;-webkit-text-stroke:0.2px #fff;">We could add forecasts for the</div>
<div class="t" style="left:970.90px;top:512px;font-size:17.5px;line-height:24px;letter-spacing:0.143px;color:#262626;-webkit-text-stroke:0.2px #fff;">next year and a comparison</div>
<div class="t" style="left:972.90px;top:537px;font-size:17.5px;line-height:24px;letter-spacing:0.120px;color:#262626;-webkit-text-stroke:0.2px #fff;">with the previous year.</div>
<svg width="1310" height="699" viewBox="0 0 1310 699" fill="none"><circle cx="1157" cy="338.900" r="1.800" fill="#222"/><circle cx="1166" cy="338.900" r="1.800" fill="#222"/><circle cx="1174.900" cy="338.900" r="1.800" fill="#222"/><path d="M1201.500 334.600 V330.800 Q1201.500 328.400 1204.400 328.400 Q1207.300 328.400 1207.300 330.800 V335.500 H1210.800 Q1212.600 335.500 1212.600 337.300 V346.800 Q1212.600 348.700 1210.800 348.700 H1203 C1199.200 348.700 1197.100 346 1197.100 342.700 C1197.100 339 1199.700 337 1201.500 334.600 Z" stroke="#222" stroke-width="1.150"/><path d="M1205.400 335.500 V348.700" stroke="#222" stroke-width="1.100"/><path d="M1205.400 338.900 H1212.600 M1205.400 342.400 H1212.600 M1205.400 345.900 H1212.600" stroke="#555" stroke-width="0.900"/></svg>
<div class="b" style="left:924px;top:582px;width:303px;height:40px;background:#fff;border:1px solid #777;border-radius:3px"></div>
<div class="t" style="left:940.60px;top:592px;font-size:17.5px;line-height:24px;letter-spacing:-0.400px;color:#5a5a5a;">Reply</div>
<div class="b" style="left:0;top:664px;width:1310px;height:33px;background:#f3f3f3;border-top:1px solid #c8c8c8"></div>
<div class="b" style="left:759px;top:665px;width:60px;height:32px;background:#c6c6c6"></div>
<div class="t" style="left:19.20px;top:671px;font-size:16px;line-height:21px;letter-spacing:-0.342px;color:#444;-webkit-text-stroke:0.15px #f3f3f3;">Slide 1 of 1</div>
<div class="t" style="left:198.50px;top:671px;font-size:16px;line-height:21px;letter-spacing:-0.180px;color:#2f2f2f;font-weight:700;">Accessibility: Investigate</div>
<div class="t" style="left:560.80px;top:671px;font-size:16px;line-height:21px;letter-spacing:-0.274px;color:#444;-webkit-text-stroke:0.15px #f3f3f3;">Notes</div>
<div class="t" style="left:656.50px;top:671px;font-size:16px;line-height:21px;letter-spacing:-0.366px;color:#444;-webkit-text-stroke:0.15px #f3f3f3;">Comments</div>
<div class="t" style="left:1213.80px;top:671px;font-size:16px;line-height:21px;letter-spacing:-1.002px;color:#444;-webkit-text-stroke:0.15px #f3f3f3;">40%</div>
<svg width="1310" height="699" viewBox="0 0 1310 699" fill="none"><path d="M143.200 672.500 H124.600 V686.800 H131.600 L133.300 689.300 L135 686.800 H142.700 V681.600 M133.300 672.500 V686.800" stroke="#6a6a6a" stroke-width="1"/><path d="M144.600 676.700 L137.800 683" stroke="#6a6a6a" stroke-width="2.6"/><path d="M136.200 684.600 L136.800 682 L138.800 684 Z" fill="#6a6a6a"/><path d="M179.800 671.800 A9 9 0 0 0 180.600 689.100" stroke="#444" stroke-width="1.3" stroke-dasharray="4.3 2"/><path d="M181.800 670.900 V681 M179.200 678.300 L181.800 681.200 L184.400 678.300" stroke="#444" stroke-width="1.2"/><path d="M185.200 679.600 H192 M189.300 677 L192.100 679.600 L189.300 682.200" stroke="#444" stroke-width="1.2"/><path d="M193.400 683.200 L182.400 692.200" stroke="#3a3a3a" stroke-width="2.4"/><path d="M182.600 682.600 L193.800 692.500" stroke="#3a3a3a" stroke-width="1.5"/><path d="M537 682.200 H553.500 M537 685.500 H553.500 M537 688.700 H545.500" stroke="#6a6a6a" stroke-width="1"/><path d="M541.500 678.500 L545.200 673.800 L549 678.500 Z" fill="#6a6a6a"/><path d="M631.500 671 H650.300 Q651.900 671 651.900 672.600 V683 Q651.900 684.600 650.300 684.600 H640 L635.300 690 V684.600 H631.500 Q629.900 684.600 629.900 683 V672.600 Q629.900 671 631.500 671 Z" fill="#4a4a4a"/><rect x="780.500" y="672.900" width="17.500" height="16" stroke="#6a6a6a" stroke-width="1"/><path d="M784.500 672.900 V688.900 M784.500 684.500 H798" stroke="#6a6a6a" stroke-width="1"/><rect x="788.500" y="676.500" width="5.500" height="4.500" stroke="#6a6a6a" stroke-width="1"/><rect x="840.2" y="672.9" width="7.800" height="6.800" stroke="#6a6a6a" stroke-width="1"/><rect x="840.2" y="682.2" width="7.800" height="6.800" stroke="#6a6a6a" stroke-width="1"/><rect x="851.2" y="672.9" width="7.800" height="6.800" stroke="#6a6a6a" stroke-width="1"/><rect x="851.2" y="682.2" width="7.800" height="6.800" stroke="#6a6a6a" stroke-width="1"/><path d="M909.500 674.300 C906.500 672.800 903.500 672.800 900 673.500 V686.800 C903.500 686 906.500 686.200 909.500 687.700 C912.500 686.200 915.500 686 919 686.800 V673.500 C915.500 672.800 912.500 672.800 909.500 674.300 Z M909.500 674.300 V689" stroke="#6a6a6a" stroke-width="1"/><path d="M902 676.500 H907.500 M902 679 H907.500 M902 681.500 H907.500 M902 684 H907.500 M911.500 676.500 H917 M911.500 679 H917 M911.500 681.500 H917 M911.500 684 H917" stroke="#6a6a6a" stroke-width="0.9"/><path d="M960.500 673.500 H979" stroke="#6a6a6a" stroke-width="1.6"/><path d="M962.500 674 V683.500 H977 V674 M966 677.500 H973.500 M969.800 683.500 V689 M965.500 689.300 H974" stroke="#6a6a6a" stroke-width="1"/><path d="M1007 680 H1018.200" stroke="#555" stroke-width="1.2"/><path d="M1027 680 H1174.700" stroke="#2f2f2f" stroke-width="1.6"/><rect x="1050.300" y="672.600" width="7.400" height="16.200" fill="#444"/><path d="M1100.600 676.600 V684.800" stroke="#2f2f2f" stroke-width="1.2"/><path d="M1183.300 680 H1193.700 M1188.500 674.800 V685.200" stroke="#555" stroke-width="1.2"/><rect x="1267.500" y="673.500" width="14" height="14" rx="1" stroke="#6a6a6a" stroke-width="1.1"/><path d="M1274.500 675 V678 M1274.500 683 V686 M1269 680.500 H1272 M1277 680.500 H1280" stroke="#6a6a6a" stroke-width="1"/><path d="M1273.300 676.200 L1274.500 675 L1275.700 676.200 M1273.300 684.800 L1274.500 686 L1275.700 684.800 M1270.200 679.300 L1269 680.500 L1270.200 681.700 M1278.800 679.300 L1280 680.500 L1278.800 681.700" stroke="#6a6a6a" stroke-width="0.8"/></svg>
</div></body></html>
